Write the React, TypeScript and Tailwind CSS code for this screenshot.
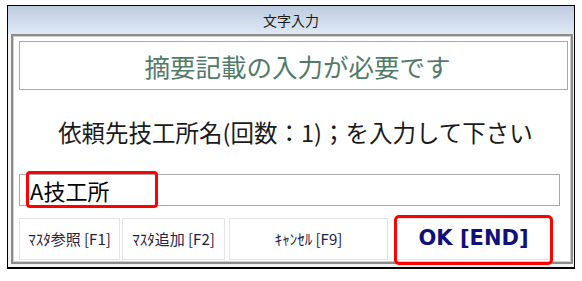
const jp = "font-['Noto_Sans_CJK_JP','Noto_Sans',sans-serif]";

function SubButton({ label, className }: { label: string; className: string }) {
  return (
    <div
      className={`flex h-[42px] items-center justify-center border border-[#e4e4e4] bg-white text-[15px] text-[#222244] ${className}`}
    >
      {label}
    </div>
  );
}

export default function App() {
  return (
    <div className={`h-[281px] w-[582px] bg-white pl-[7px] pt-[5px] ${jp}`}>
      <div className="flex w-[568px] flex-col border border-b-2 border-black bg-[#f2f2f2] pb-[3px]">
        <div className="flex h-[28px] items-center justify-center bg-gradient-to-b from-[#bccce0] to-[#dfe9f5] text-[14px] leading-none text-[#1a1a1a]">
          文字入力
        </div>
        <div className="ml-[3px] mr-[1px] h-[230px] border-2 border-[#8c8c8c] bg-white pl-[6px] pt-[5px] shadow-[inset_0_0_0_1px_#cfcfcf]">
          <div className="flex h-[49px] w-[549px] items-center justify-center border border-[#a9a9a9] pl-[8px] text-[25.5px] leading-none text-[#527a6b]">
            摘要記載の入力が必要です
          </div>
          <div className="flex h-[84px] w-[549px] items-center justify-center pl-[4px] pt-[1px] text-[23.5px] leading-none text-[#1a1a1a]">
            依頼先技工所名(回数：1)；を入力して下さい
          </div>
          <div className="relative flex h-[32px] w-[541px] items-center border border-[#a8a8a8] pl-[10px] text-[22px] leading-none text-black">
            A技工所
            <div className="absolute left-[6px] -top-[4px] h-[37px] w-[132px] rounded-[4px] border-[3px] border-[#ff0000]" />
          </div>
          <div className="mt-[12px] flex">
            <SubButton label="ﾏｽﾀ参照 [F1]" className="w-[101px]" />
            <SubButton label="ﾏｽﾀ追加 [F2]" className="ml-[2px] w-[103px]" />
            <SubButton label="ｷｬﾝｾﾙ [F9]" className="ml-[4px] w-[159px]" />
            <div className="relative ml-[7px] flex h-[42px] w-[157px] items-center justify-center border border-[#e4e4e4] bg-white font-['DejaVu_Sans',sans-serif] text-[21px] font-bold text-[#10107a]">
              OK [END]
              <div className="absolute -bottom-[6px] -left-[2px] -right-[2px] -top-[4px] rounded-[5px] border-[3px] border-[#ff0000]" />
            </div>
          </div>
        </div>
      </div>
    </div>
  );
}
